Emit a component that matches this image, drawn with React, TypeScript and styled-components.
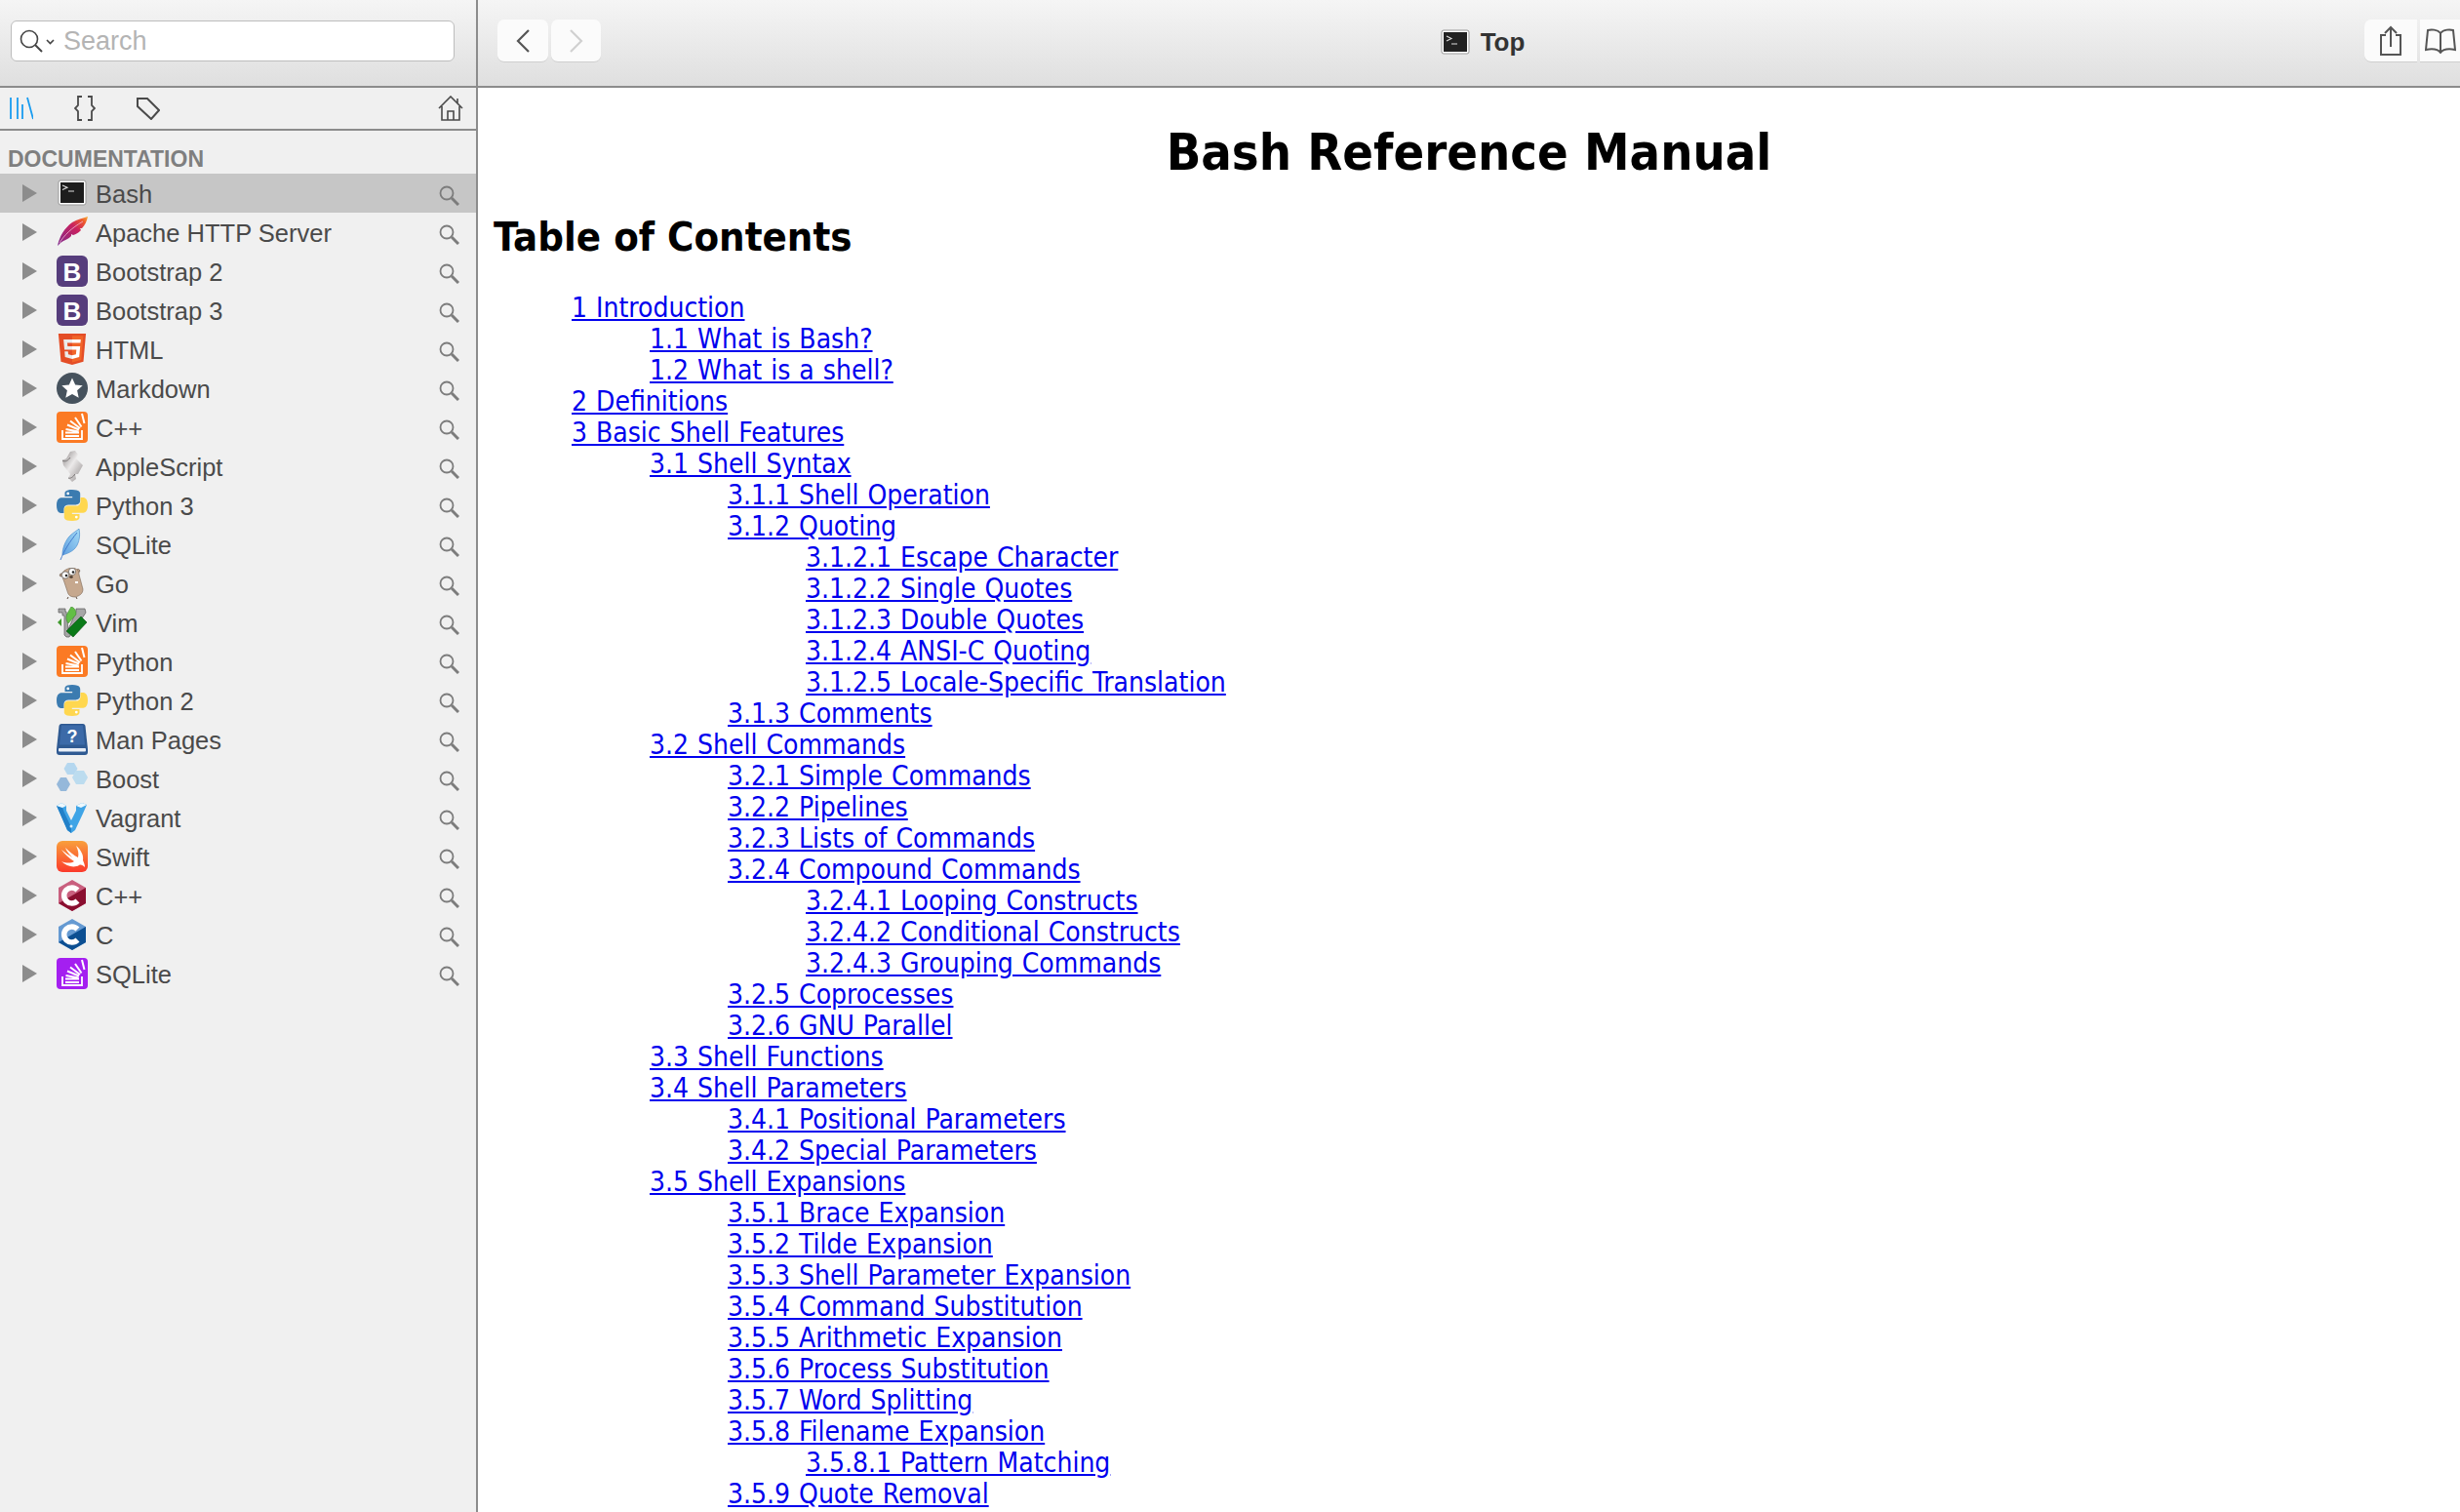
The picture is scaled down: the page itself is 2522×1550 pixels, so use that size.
import React from 'react';
import styled, { createGlobalStyle } from 'styled-components';

const GlobalStyle = createGlobalStyle`
  html, body {
    margin: 0;
    padding: 0;
    height: 100%;
    overflow: hidden;
    background: #fff;
  }
`;

type TocEntry = { label: string; children?: TocEntry[] };

const toc: TocEntry[] = [
  { label: '1 Introduction', children: [{ label: '1.1 What is Bash?' }, { label: '1.2 What is a shell?' }] },
  { label: '2 Definitions' },
  {
    label: '3 Basic Shell Features',
    children: [
      {
        label: '3.1 Shell Syntax',
        children: [
          { label: '3.1.1 Shell Operation' },
          {
            label: '3.1.2 Quoting',
            children: [
              { label: '3.1.2.1 Escape Character' },
              { label: '3.1.2.2 Single Quotes' },
              { label: '3.1.2.3 Double Quotes' },
              { label: '3.1.2.4 ANSI-C Quoting' },
              { label: '3.1.2.5 Locale-Specific Translation' },
            ],
          },
          { label: '3.1.3 Comments' },
        ],
      },
      {
        label: '3.2 Shell Commands',
        children: [
          { label: '3.2.1 Simple Commands' },
          { label: '3.2.2 Pipelines' },
          { label: '3.2.3 Lists of Commands' },
          {
            label: '3.2.4 Compound Commands',
            children: [
              { label: '3.2.4.1 Looping Constructs' },
              { label: '3.2.4.2 Conditional Constructs' },
              { label: '3.2.4.3 Grouping Commands' },
            ],
          },
          { label: '3.2.5 Coprocesses' },
          { label: '3.2.6 GNU Parallel' },
        ],
      },
      { label: '3.3 Shell Functions' },
      {
        label: '3.4 Shell Parameters',
        children: [{ label: '3.4.1 Positional Parameters' }, { label: '3.4.2 Special Parameters' }],
      },
      {
        label: '3.5 Shell Expansions',
        children: [
          { label: '3.5.1 Brace Expansion' },
          { label: '3.5.2 Tilde Expansion' },
          { label: '3.5.3 Shell Parameter Expansion' },
          { label: '3.5.4 Command Substitution' },
          { label: '3.5.5 Arithmetic Expansion' },
          { label: '3.5.6 Process Substitution' },
          { label: '3.5.7 Word Splitting' },
          { label: '3.5.8 Filename Expansion', children: [{ label: '3.5.8.1 Pattern Matching' }] },
          { label: '3.5.9 Quote Removal' },
        ],
      },
    ],
  },
];

const Window = styled.div`
  display: grid;
  grid-template-columns: 490px 1fr;
  height: 100vh;
  overflow: hidden;
`;

const Sidebar = styled.aside`
  display: flex;
  flex-direction: column;
  background: #f0f0f0;
  border-right: 2px solid #8c8c8c;
  font-family: 'Liberation Sans', Arial, sans-serif;
`;

const SearchBar = styled.div`
  box-sizing: border-box;
  height: 90px;
  padding: 21px 22px 0 11px;
  background: linear-gradient(#f5f5f5, #dfdfdf);
  border-bottom: 2px solid #8c8c8c;
`;

const SearchBox = styled.div`
  box-sizing: border-box;
  height: 42px;
  display: flex;
  align-items: center;
  gap: 6px;
  padding-left: 7px;
  background: #fff;
  border: 1px solid #bdbdbd;
  border-radius: 6px;
  color: #b4b4b4;
  font-size: 27px;
`;

const TabBar = styled.div`
  box-sizing: border-box;
  height: 44px;
  display: flex;
  align-items: center;
  padding: 0 13px 0 10px;
  gap: 42px;
  border-bottom: 2px solid #8c8c8c;
`;

const TabSpacer = styled.div`
  flex: 1;
`;

const SectionLabel = styled.div`
  height: 44px;
  padding: 16px 0 0 8px;
  box-sizing: border-box;
  font-size: 23px;
  line-height: 26px;
  font-weight: 700;
  color: #7f7f7f;
`;

const DocRow = styled.div<{ $selected?: boolean }>`
  height: 40px;
  display: flex;
  align-items: center;
  padding-left: 23px;
  background: ${p => (p.$selected ? '#c6c6c6' : 'transparent')};
  color: #4a4a4a;
  font-size: 25.5px;
`;

const Disclosure = styled.span`
  width: 0;
  height: 0;
  margin-right: 20px;
  border-left: 15px solid #8c8c8c;
  border-top: 9px solid transparent;
  border-bottom: 9px solid transparent;
`;

const DocName = styled.span`
  flex: 1;
  margin-left: 8px;
  padding-top: 3px;
`;

const RowSearch = styled.svg`
  width: 21px;
  height: 21px;
  margin: 4px 17px 0 0;
  fill: none;
  stroke: #7c7c7c;
`;

const Main = styled.main`
  display: flex;
  flex-direction: column;
  min-width: 0;
  background: #fff;
`;

const Toolbar = styled.header`
  box-sizing: border-box;
  height: 90px;
  flex: none;
  display: flex;
  align-items: flex-start;
  padding: 20px 0 0 20px;
  background: linear-gradient(#f5f5f5, #dfdfdf);
  border-bottom: 2px solid #8c8c8c;
`;

const ButtonGroup = styled.div`
  display: flex;
  gap: 3px;
`;

const ToolButton = styled.div<{ $width: number; $joined?: 'left' | 'right' }>`
  box-sizing: border-box;
  width: ${p => p.$width}px;
  height: 44px;
  display: flex;
  align-items: center;
  justify-content: center;
  background: #fbfbfb;
  border-bottom: 1px solid #cfcfcf;
  border-radius: ${p => (p.$joined === 'left' ? '7px 0 0 7px' : p.$joined === 'right' ? '0' : '7px')};
`;

const ToolbarTitle = styled.div`
  flex: 1;
  height: 46px;
  display: flex;
  align-items: center;
  justify-content: center;
  gap: 11px;
  font-family: 'Liberation Sans', Arial, sans-serif;
  font-weight: 700;
  font-size: 26px;
  color: #333;
`;

const Doc = styled.article`
  padding: 0 16px;
  font-family: 'DejaVu Sans Condensed', 'DejaVu Sans', sans-serif;
  font-stretch: condensed;
  color: #000;
`;

const DocTitle = styled.h1`
  margin: 0;
  padding-top: 36px;
  font-size: 52px;
  line-height: 60px;
  font-weight: 700;
  text-align: center;
`;

const ContentsTitle = styled.h2`
  margin: 0;
  padding-top: 33px;
  font-size: 41.5px;
  line-height: 48px;
  font-weight: 700;
`;

const TocList = styled.ul<{ $top?: boolean }>`
  list-style: none;
  margin: ${p => (p.$top ? '33px 0 0' : '0')};
  padding: 0 0 0 80px;
`;

const TocItem = styled.li`
  font-size: 28px;
  line-height: 32px;
  word-spacing: 1px;
`;

const TocLink = styled.a`
  color: #0000ee;
  text-decoration: underline;
`;

const IconSvg = styled.svg`
  width: 32px;
  height: 32px;
  flex: none;
`;

const BashGlyph = () => (
  <IconSvg viewBox="0 0 32 32">
    <rect x="2" y="3" width="28" height="25" rx="2" fill="#fff" stroke="#9a9a9a" />
    <rect x="4" y="5" width="24" height="21" fill="#1d1d1d" />
    <path d="M6 8l5 2.2L6 12.500M12 14h6" fill="none" stroke="#ddd" strokeWidth="1.100" />
  </IconSvg>
);

const FeatherGlyph = () => (
  <IconSvg viewBox="0 0 32 32">
    <defs>
      <linearGradient id="apacheFeather" x1="0" y1="1" x2="1" y2="0">
        <stop offset="0" stopColor="#7b2a8f" />
        <stop offset="0.6" stopColor="#c9215f" />
        <stop offset="0.85" stopColor="#ee5a2c" />
        <stop offset="1" stopColor="#f8b133" />
      </linearGradient>
    </defs>
    <path
      d="M1 30C3 20 8 12 16 6c5-3 11-4.500 16-6-1 5-3 9-6 12h-2l1 2c-3 3-5 4-8 5l-2-1v2c-3 3-6 4-8 5l-3 2z"
      fill="url(#apacheFeather)"
    />
    <path d="M3 27C8 19 15 12 27 5" stroke="#f0b8d0" strokeWidth="0.8" fill="none" />
  </IconSvg>
);

const BootstrapGlyph = () => (
  <IconSvg viewBox="0 0 32 32">
    <rect width="32" height="32" rx="6" fill="#563d7c" />
    <text x="16" y="25.5" textAnchor="middle" fontFamily="Liberation Sans, Arial, sans-serif" fontWeight="700" fontSize="26" fill="#fff">B</text>
  </IconSvg>
);

const HtmlGlyph = () => (
  <IconSvg viewBox="0 0 512 512">
    <path fill="#e44d26" d="M71 460L30 0h451l-41 460-185 52z" />
    <path fill="#f16529" d="M256 472l149-41 35-394H256z" />
    <path fill="#ebebeb" d="M256 208h-75l-5-58h80V94H114l15 171h127zM256 355l-64-17-4-45h-56l7 89 117 32z" />
    <path fill="#fff" d="M255 208v57h70l-7 73-63 17v59l116-32 16-174zM255 94v56h137l5-56z" />
  </IconSvg>
);

const MarkdownGlyph = () => (
  <IconSvg viewBox="0 0 32 32">
    <circle cx="16" cy="16" r="16" fill="#46525d" />
    <path fill="#fff" d="M16 5.500l3.200 7 7.500.8-5.600 5 1.600 7.500-6.700-3.800-6.700 3.800 1.600-7.500-5.600-5 7.500-.8z" />
  </IconSvg>
);

const StackGlyph = ({ color }: { color: string }) => (
  <IconSvg viewBox="0 0 32 32">
    <rect width="32" height="32" rx="4" fill={color} />
    <g fill="none" stroke="#fff" strokeWidth="2">
      <path d="M6 19v9h20v-9" strokeWidth="1.800" />
      <path d="M9 25h14M9 21.500h14M9.500 18l13 2.500M11 13.500l12 5M14 9.500l10 7.500M19 6l6.500 9.500M26 2l2.500 10" />
    </g>
  </IconSvg>
);

const ScrollGlyph = () => (
  <IconSvg viewBox="0 0 32 32">
    <defs>
      <linearGradient id="scrollFill" x1="0" y1="0" x2="1" y2="1">
        <stop offset="0" stopColor="#8a8585" />
        <stop offset="0.45" stopColor="#eceaea" />
        <stop offset="1" stopColor="#8f8a8a" />
      </linearGradient>
    </defs>
    <path d="M14 1l5-1 3 4-2 4 7 7-5 9h-3l1 5-4 3-4-4 2-4-7-9-1-5 4-2z" fill="url(#scrollFill)" />
    <path d="M6 10c3 2 6 0 8-3M12 28c2 1 5-1 7-4" fill="none" stroke="#7a7676" strokeWidth="1" />
  </IconSvg>
);

const PYTHON_SNAKE = 'M16 0C8 0 8.500 3.500 8.500 3.500v3.600h7.700v1.100H5.300S0 7.600 0 16s4.700 8 4.700 8h2.800v-3.900s-.2-4.700 4.600-4.700h7.700s4.400.1 4.400-4.300V4.300S25.100 0 16 0z';

const PythonGlyph = () => (
  <IconSvg viewBox="0 0 32 32">
    <path d={PYTHON_SNAKE} fill="#3b7bb0" />
    <circle cx="11.7" cy="3.900" r="1.400" fill="#fff" />
    <g transform="rotate(180 16 16)">
      <path d={PYTHON_SNAKE} fill="#ffd74f" />
      <circle cx="11.7" cy="3.900" r="1.400" fill="#fff" />
    </g>
  </IconSvg>
);

const QuillGlyph = () => (
  <IconSvg viewBox="0 0 32 32">
    <defs>
      <linearGradient id="quillFill" x1="0" y1="1" x2="1" y2="0">
        <stop offset="0" stopColor="#5f9fe0" />
        <stop offset="1" stopColor="#a5dcf7" />
      </linearGradient>
    </defs>
    <path d="M6 27C6 20 9 12 14 7c3-3 7-5 9-7 1 5 1 11-2 17-2 4-6 7-12 9z" fill="url(#quillFill)" stroke="#4a8fd0" strokeWidth="0.7" />
    <path d="M4 32C8 22 13 14 21 4" stroke="#3c74c8" strokeWidth="0.9" fill="none" />
  </IconSvg>
);

const GopherGlyph = () => (
  <IconSvg viewBox="0 0 32 32">
    <path d="M20 3c1-2 3-2 4 0l-2 3zM4 9c-1-1-1-3 1-3l2 2z" fill="#c4a58a" stroke="#5c4a3c" strokeWidth="0.7" />
    <path d="M5 7c1-4 7-7 12-7 4 1 6 3 6 7l4 15c0 5-4 7-8 8-5 0-7-2-8-6L8 15z" fill="#c6a88e" stroke="#7a6656" strokeWidth="0.6" />
    <circle cx="9" cy="7.500" r="3.600" fill="#fff" stroke="#444" strokeWidth="0.6" />
    <circle cx="16" cy="4" r="3.600" fill="#fff" stroke="#444" strokeWidth="0.6" />
    <circle cx="10" cy="8" r="1.300" fill="#222" />
    <circle cx="17" cy="4.500" r="1.300" fill="#222" />
    <ellipse cx="15" cy="9.500" rx="1.800" ry="1.200" fill="#4a3a2e" />
    <rect x="19" y="14" width="3" height="2" fill="#fff" />
    <path d="M12 30l-1 2M20 30l1 2" stroke="#5c4a3c" strokeWidth="1" />
  </IconSvg>
);

const VimGlyph = () => (
  <IconSvg viewBox="0 0 32 32">
    <path d="M2 2h7v3h1l2 18L20 5V2h9l1 4-17 25h-3l-2-2V9H6V6H2z" fill="#a6a6a6" stroke="#5a5a5a" strokeWidth="0.7" />
    <path d="M15 0c4 1 5 5 5 8l-8 9c-2-3-3-6-1-10z" fill="#62bf45" stroke="#2f7a22" strokeWidth="0.5" />
    <path d="M25 10l6 6-14 15-7-6z" fill="#0a7a18" stroke="#064d0e" strokeWidth="0.6" />
    <path d="M1 16l4-4v8z" fill="#3f9a2c" />
  </IconSvg>
);

const BookGlyph = () => (
  <IconSvg viewBox="0 0 32 32">
    <path d="M5 0h22c1.500 0 2.300 1 2.500 2.500L32 26v3c0 2-1 3-3 3H3c-2 0-3-1-3-3v-3L2.500 2.500C2.700 1 3.500 0 5 0z" fill="#2f5a92" />
    <path d="M5 1.500h22l2 20H3z" fill="#3c6aa8" />
    <rect x="2" y="25" width="28" height="3.500" rx="1" fill="#e8eef6" />
    <text x="16" y="19" textAnchor="middle" fontFamily="Liberation Sans, Arial, sans-serif" fontWeight="700" fontSize="18" fill="#fff">?</text>
  </IconSvg>
);

const BoostGlyph = () => (
  <IconSvg viewBox="0 0 32 32">
    <path d="M11 0h7l3.500 6-3.500 6h-7L7.500 6z" fill="#b5d7ef" />
    <path d="M20 8h8l4 7-4 7h-8l-4-7z" fill="#bcdcef" />
    <path d="M4 15h6l4 7-4 7H4L0 22z" fill="#95b8da" />
  </IconSvg>
);

const VagrantGlyph = () => (
  <IconSvg viewBox="0 0 32 32">
    <path d="M0 4l5-3 5 3v5l5 10 5-10V4l6-3 5 2-4 9-8 17-4 3-4-3-7-16z" fill="#3fa4e6" />
    <path d="M0 4l4 9 7 16 4 3v-6L8 11 6 6z" fill="#2280c8" />
    <path d="M0 4l5-3 5 3-4 2zM20 4l6-3 5 2-6 3z" fill="#eef8fd" />
    <circle cx="15" cy="25" r="1.500" fill="#d6eefb" />
  </IconSvg>
);

const SwiftGlyph = () => (
  <IconSvg viewBox="0 0 32 32">
    <defs>
      <linearGradient id="swiftFill" x1="0.5" y1="0" x2="0.5" y2="1">
        <stop offset="0" stopColor="#f9a03c" />
        <stop offset="1" stopColor="#fb3a2c" />
      </linearGradient>
    </defs>
    <rect width="32" height="32" rx="6" fill="url(#swiftFill)" />
    <path
      fill="#fff"
      d="M20 5c5 4 8 10 7 15 1 2 2 5 2 7-2-2-4-3-6-2-5 3-13 1-18-4 5 2 10 2 13 0C13 18 8 13 5 9c4 3 8 6 11 8-3-3-6-7-7-10 4 4 9 8 13 10 1-4 0-8-2-12z"
    />
  </IconSvg>
);

const HexCGlyph = ({ light, dark }: { light: string; dark: string }) => (
  <IconSvg viewBox="0 0 32 32">
    <path d="M16 0l14 8v16l-14 8-14-8V8z" fill={light} />
    <path d="M30 8v16l-14 8-14-8z" fill={dark} />
    <path d="M21.5 10.500a8 8 0 1 0 0 11" fill="none" stroke="#fff" strokeWidth="5.500" />
  </IconSvg>
);

const docs: { name: string; icon: React.ReactNode }[] = [
  { name: 'Bash', icon: <BashGlyph /> },
  { name: 'Apache HTTP Server', icon: <FeatherGlyph /> },
  { name: 'Bootstrap 2', icon: <BootstrapGlyph /> },
  { name: 'Bootstrap 3', icon: <BootstrapGlyph /> },
  { name: 'HTML', icon: <HtmlGlyph /> },
  { name: 'Markdown', icon: <MarkdownGlyph /> },
  { name: 'C++', icon: <StackGlyph color="#fb7a24" /> },
  { name: 'AppleScript', icon: <ScrollGlyph /> },
  { name: 'Python 3', icon: <PythonGlyph /> },
  { name: 'SQLite', icon: <QuillGlyph /> },
  { name: 'Go', icon: <GopherGlyph /> },
  { name: 'Vim', icon: <VimGlyph /> },
  { name: 'Python', icon: <StackGlyph color="#fb7a24" /> },
  { name: 'Python 2', icon: <PythonGlyph /> },
  { name: 'Man Pages', icon: <BookGlyph /> },
  { name: 'Boost', icon: <BoostGlyph /> },
  { name: 'Vagrant', icon: <VagrantGlyph /> },
  { name: 'Swift', icon: <SwiftGlyph /> },
  { name: 'C++', icon: <HexCGlyph light="#c9607f" dark="#8a0f30" /> },
  { name: 'C', icon: <HexCGlyph light="#659ad2" dark="#0c4f92" /> },
  { name: 'SQLite', icon: <StackGlyph color="#a41ff0" /> },
];

const TocTree = ({ entries, top }: { entries: TocEntry[]; top?: boolean }) => (
  <TocList $top={top}>
    {entries.map(entry => (
      <TocItem key={entry.label}>
        <TocLink href="#">{entry.label}</TocLink>
        {entry.children && <TocTree entries={entry.children} />}
      </TocItem>
    ))}
  </TocList>
);

function App() {
  return (
    <Window>
      <GlobalStyle />
      <Sidebar>
        <SearchBar>
          <SearchBox>
            <svg width="40" height="26" viewBox="0 0 40 26" fill="none" stroke="#444">
              <circle cx="11" cy="11" r="8.500" strokeWidth="1.600" />
              <path d="M17 17l7 7" strokeWidth="2" />
              <path d="M29 12l3.500 3.500L36 12" strokeWidth="1.600" />
            </svg>
            Search
          </SearchBox>
        </SearchBar>
        <TabBar>
          <svg width="24" height="24" viewBox="0 0 24 24" fill="none" stroke="#1a9cf0" strokeWidth="1.800">
            <path d="M1 1v22M8 1v22M13 8v15M18 1l6 22" />
          </svg>
          <svg width="22" height="26" viewBox="0 0 22 26" fill="none" stroke="#4a4a4a" strokeWidth="1.800">
            <path d="M8 1H4v9l-3 3 3 3v9h4M14 1h4v9l3 3-3 3v9h-4" />
          </svg>
          <svg width="24" height="24" viewBox="0 0 24 24" fill="none" stroke="#4a4a4a" strokeWidth="2">
            <path d="M1 2h10l12 12-8 9L1 10z" />
          </svg>
          <TabSpacer />
          <svg width="26" height="26" viewBox="0 0 26 26" fill="none" stroke="#4a4a4a" strokeWidth="1.600">
            <path d="M1 13L13 1l12 12M4 11v14h18V11M10 25v-9h6v9M20 3v5" />
          </svg>
        </TabBar>
        <SectionLabel>DOCUMENTATION</SectionLabel>
        {docs.map((doc, i) => (
          <DocRow key={i} $selected={i === 0}>
            <Disclosure />
            {doc.icon}
            <DocName>{doc.name}</DocName>
            <RowSearch viewBox="0 0 21 21">
              <circle cx="8" cy="8" r="6.500" strokeWidth="1.800" />
              <path d="M13 13l7 7" strokeWidth="3" />
            </RowSearch>
          </DocRow>
        ))}
      </Sidebar>
      <Main>
        <Toolbar>
          <ButtonGroup>
            <ToolButton $width={52}>
              <svg width="16" height="24" viewBox="0 0 16 24" fill="none" stroke="#555" strokeWidth="2.200">
                <path d="M14 1L3 12l11 11" />
              </svg>
            </ToolButton>
            <ToolButton $width={51}>
              <svg width="16" height="24" viewBox="0 0 16 24" fill="none" stroke="#d0d0d0" strokeWidth="2.200">
                <path d="M2 1l11 11L2 23" />
              </svg>
            </ToolButton>
          </ButtonGroup>
          <ToolbarTitle>
            <svg width="30" height="26" viewBox="0 0 30 26">
              <rect x="1" y="1" width="28" height="24" rx="2" fill="#fff" stroke="#9a9a9a" />
              <rect x="3" y="3" width="24" height="20" fill="#222" />
              <path d="M6 7l5 2.500L6 12M11 15h6" fill="none" stroke="#ddd" strokeWidth="1.100" />
            </svg>
            Top
          </ToolbarTitle>
          <ButtonGroup>
            <ToolButton $width={54} $joined="left">
              <svg width="24" height="32" viewBox="0 0 24 32" fill="none" stroke="#555" strokeWidth="2">
                <path d="M7 10H2v20h20V10h-5M12 22V2M6 8l6-6 6 6" />
              </svg>
            </ToolButton>
            <ToolButton $width={41} $joined="right">
              <svg width="32" height="26" viewBox="0 0 32 26" fill="none" stroke="#555" strokeWidth="2">
                <path d="M16 5C13 1 6 1 3 2L1 22c5-1 12-1 15 3 3-4 10-4 15-3L29 2c-3-1-10-1-13 3zM16 5v20" />
              </svg>
            </ToolButton>
          </ButtonGroup>
        </Toolbar>
        <Doc>
          <DocTitle>Bash Reference Manual</DocTitle>
          <ContentsTitle>Table of Contents</ContentsTitle>
          <TocTree entries={toc} top />
        </Doc>
      </Main>
    </Window>
  );
}

export default App;
